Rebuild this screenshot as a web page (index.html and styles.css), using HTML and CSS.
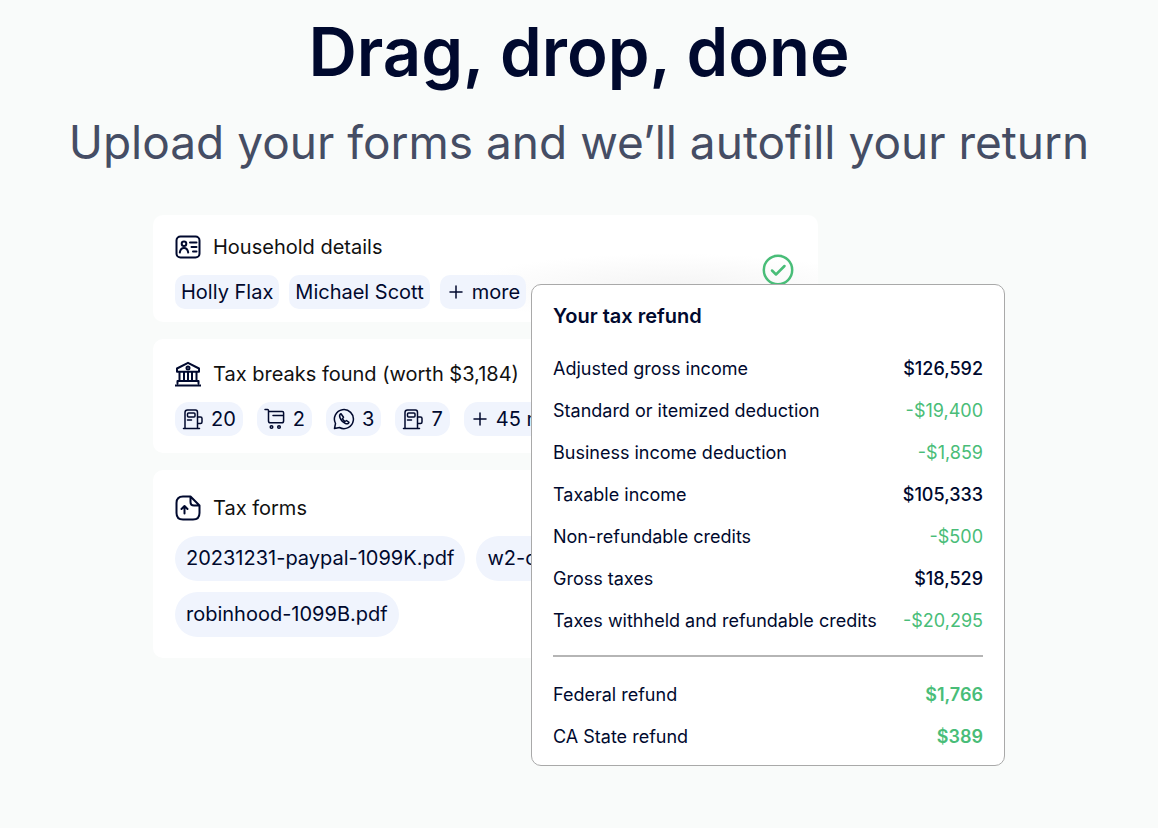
FILE: index.html
```
<!DOCTYPE html>
<html lang="en">
<head>
  <meta charset="UTF-8">
  <meta name="viewport" content="width=device-width, initial-scale=1.0">
  <title>Drag, drop, done</title>
  <link rel="stylesheet" href="styles.css">
</head>
<body>
  <main class="hero">
    <h1 class="hero-title">Drag, drop, done</h1>
    <p class="hero-subtitle">Upload your forms and we’ll autofill your return</p>

    <div class="preview">
      <div class="panels">
        <section class="panel panel-household">
          <div class="panel-main">
            <h2 class="panel-title">
              <svg class="panel-icon" viewBox="0 0 26 26" aria-hidden="true">
                <rect x="1.5" y="2.5" width="23" height="21" rx="4"/>
                <circle cx="9" cy="9.7" r="2.3"/>
                <path d="M4.8 18.5c.5-3 2-4.500 4.200-4.500s3.700 1.500 4.200 4.500M15 8.500h6.500M16.500 13h5M18 17.500h3.500"/>
              </svg>
              Household details
            </h2>
            <div class="chips">
              <span class="chip">Holly Flax</span>
              <span class="chip">Michael Scott</span>
              <span class="chip chip-more"><svg class="plus" viewBox="0 0 14 14" aria-hidden="true"><path d="M7 1v12M1 7h12"/></svg>more</span>
            </div>
          </div>
          <svg class="check" viewBox="0 0 32 32" aria-hidden="true">
            <circle cx="16" cy="16" r="14.2"/>
            <path d="M10 16.500l4 4 8.500-8.500"/>
          </svg>
        </section>

        <section class="panel panel-breaks">
          <h2 class="panel-title">
            <svg class="panel-icon" viewBox="0 0 26 26" aria-hidden="true">
              <path d="M2 7.500L13 1.800l11 5.700v3.200H2zM4.500 11v9M9 11v9M13 11v9M17 11v9M21.500 11v9M2.500 20h21v2.500M2.500 20v2.500M.5 24.500h25"/>
              <circle cx="13" cy="7" r="1.5"/>
            </svg>
            Tax breaks found (worth $3,184)
          </h2>
          <div class="chips chips-icons">
            <span class="chip chip-count">
              <svg class="chip-icon" viewBox="0 0 22 22" aria-hidden="true"><path d="M3 20V4.500Q3 2 5.500 2h8Q15.500 2 15.500 4.500V20M1.500 20.500h16M15.500 9h3q1.500 0 1.500 1.500V14q0 1.500-1.500 1.500h-3M5.500 12h4"/><rect x="5.5" y="5" width="7.5" height="4" rx="1"/></svg>
              20
            </span>
            <span class="chip chip-count">
              <svg class="chip-icon" viewBox="0 0 22 22" aria-hidden="true"><path d="M1 1.500h2.500q1 0 1 1V13q0 1.800 1.800 1.800h11.500q1.800 0 1.800-1.800V4.800q0-1.300-1.300-1.300H4.500M9 7.500h10.500"/><circle cx="7.5" cy="19" r="1.3"/><circle cx="15" cy="19" r="1.3"/></svg>
              2
            </span>
            <span class="chip chip-count">
              <svg class="chip-icon" viewBox="0 0 22 22" aria-hidden="true"><path d="M1.500 20.500l1-5A9.500 9.500 0 1 1 6.500 19.500z"/><path d="M8 5.800c-1.500.7-1.700 2.200-1 4 1 2.600 3 4.600 5.500 5.700 1.800.7 3 .3 3.500-1.200L13.500 12.500l-1.500 1c-1.200-.6-2-1.500-2.500-2.700l1-1.500z"/></svg>
              3
            </span>
            <span class="chip chip-count">
              <svg class="chip-icon" viewBox="0 0 22 22" aria-hidden="true"><path d="M3 20V4.500Q3 2 5.500 2h8Q15.500 2 15.500 4.500V20M1.500 20.500h16M15.500 9h3q1.500 0 1.500 1.500V14q0 1.500-1.500 1.500h-3M5.500 12h4"/><rect x="5.5" y="5" width="7.5" height="4" rx="1"/></svg>
              7
            </span>
            <span class="chip chip-more"><svg class="plus" viewBox="0 0 14 14" aria-hidden="true"><path d="M7 1v12M1 7h12"/></svg>45 more</span>
          </div>
        </section>

        <section class="panel panel-forms">
          <h2 class="panel-title">
            <svg class="panel-icon" viewBox="0 0 26 26" aria-hidden="true">
              <path d="M15.500 1.500H8Q1.500 1.500 1.500 8v10q0 6.500 6.500 6.500h10q6.500 0 6.500-6.500v-7.500zM15.500 1.500v5.500q0 3.500 3.500 3.500h5.500M9.500 18.500v-7M6.500 14l3-3 3 3"/>
            </svg>
            Tax forms
          </h2>
          <div class="chips chips-files">
            <span class="chip chip-file">20231231-paypal-1099K.pdf</span>
            <span class="chip chip-file">w2-doc.pdf</span>
            <span class="chip chip-file">robinhood-1099B.pdf</span>
          </div>
        </section>
      </div>

      <section class="refund">
        <h2 class="refund-title">Your tax refund</h2>
        <table class="refund-table">
          <tbody class="refund-lines">
            <tr><th scope="row">Adjusted gross income</th><td>$126,592</td></tr>
            <tr><th scope="row">Standard or itemized deduction</th><td class="credit">-$19,400</td></tr>
            <tr><th scope="row">Business income deduction</th><td class="credit">-$1,859</td></tr>
            <tr><th scope="row">Taxable income</th><td>$105,333</td></tr>
            <tr><th scope="row">Non-refundable credits</th><td class="credit">-$500</td></tr>
            <tr><th scope="row">Gross taxes</th><td>$18,529</td></tr>
            <tr><th scope="row">Taxes withheld and refundable credits</th><td class="credit">-$20,295</td></tr>
          </tbody>
          <tbody class="refund-totals">
            <tr><th scope="row">Federal refund</th><td>$1,766</td></tr>
            <tr><th scope="row">CA State refund</th><td>$389</td></tr>
          </tbody>
        </table>
      </section>
    </div>
  </main>
</body>
</html>
```
FILE: styles.css
```
* {
  box-sizing: border-box;
}

body {
  margin: 0;
  background: #f9fbfa;
  color: #00092e;
  font-family: Inter, "Liberation Sans", sans-serif;
}

h1,
h2,
p {
  margin: 0;
}

svg {
  flex: none;
  fill: none;
  stroke: currentColor;
  stroke-width: 2;
  stroke-linecap: round;
  stroke-linejoin: round;
}

.hero {
  padding: 12px 24px 60px;
  text-align: center;
}

.hero-title {
  font-size: 67px;
  font-weight: 600;
  line-height: 80px;
}

.hero-subtitle {
  margin-top: 20px;
  color: #454d64;
  font-size: 46px;
  line-height: 60px;
}

/* The refund card overlaps the right side of the panels */
.preview {
  display: grid;
  grid-template-columns: 378fr 287fr 187fr;
  max-width: 852px;
  margin: 43px auto 0;
  text-align: left;
}

.panels {
  grid-area: 1 / 1 / 2 / 3;
  display: flex;
  flex-direction: column;
  gap: 17px;
}

.panel {
  padding: 18px 22px 13px;
  background: #fff;
  border-radius: 10px;
}

.panel-household {
  display: flex;
  justify-content: space-between;
  background: radial-gradient(ellipse 32% 32% at 78% 68%, #f4f4f4, #fff);
}

.panel-breaks {
  padding: 21px 22px 17px;
}

.panel-forms {
  padding: 24px 22px 21px;
}

.panel-title {
  display: flex;
  align-items: center;
  gap: 12px;
  color: #111;
  font-size: 20px;
  font-weight: 400;
  line-height: 28px;
}

.panel-icon {
  width: 26px;
  height: 26px;
  color: #00092e;
}

.check {
  width: 32px;
  height: 32px;
  margin: 21px 2px 0 0;
  color: #49bd78;
  stroke-width: 2.5;
}

.chips {
  display: flex;
  flex-wrap: wrap;
  gap: 10px;
  margin-top: 14px;
}

.chips-icons {
  gap: 14px;
}

.chips-files {
  gap: 11px;
}

.chip {
  display: flex;
  align-items: center;
  padding: 0 6px;
  background: #f0f4fd;
  border-radius: 10px;
  font-size: 20px;
  line-height: 34px;
  white-space: nowrap;
}

.chips-icons .chip {
  border-radius: 14px;
}

.chip-count {
  gap: 7px;
  padding: 0 7px;
}

.chip-icon {
  width: 22px;
  height: 22px;
  stroke-width: 1.5;
}

.chip-more {
  gap: 9px;
  padding-left: 9px;
}

.plus {
  width: 14px;
  height: 14px;
  stroke-width: 1.5;
}

.chip-file {
  padding: 0 11px;
  border-radius: 23px;
  line-height: 45px;
}

.refund {
  grid-area: 1 / 2 / 2 / 4;
  z-index: 1;
  margin-top: 69px;
  padding: 17px 21px 7px;
  background: #fff;
  border: 1px solid #a9a9a9;
  border-radius: 10px;
}

.refund-title {
  font-size: 20px;
  font-weight: 600;
  line-height: 28px;
}

.refund-table {
  width: 100%;
  margin-top: 18px;
  border-collapse: collapse;
  font-size: 18px;
  line-height: 42px;
  white-space: nowrap;
}

.refund-table th,
.refund-table td {
  padding: 0;
  font-weight: 400;
  text-align: left;
}

.refund-table td {
  font-weight: 500;
  text-align: right;
}

.refund-table .credit {
  color: #49bd78;
  font-weight: 400;
}

.refund-lines tr:last-child > * {
  padding-bottom: 13px;
  border-bottom: 2px solid #b5b5b5;
}

.refund-totals tr:first-child > * {
  padding-top: 17px;
}

.refund-totals td {
  color: #49bd78;
  font-weight: 600;
}
```
